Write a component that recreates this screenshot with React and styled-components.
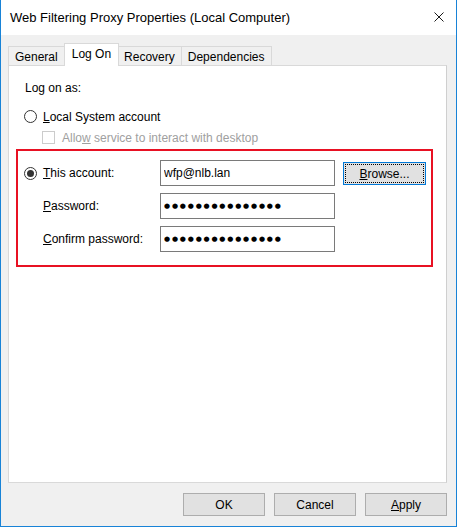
import styled, { createGlobalStyle } from "styled-components";

const GlobalStyle = createGlobalStyle`
  html, body {
    margin: 0;
    padding: 0;
    background: #ffffff;
  }
  body {
    font-family: "Liberation Sans", Arial, sans-serif;
    font-size: 12px;
    color: #000000;
  }
`;

function Key({ children }) {
  return <u>{children}</u>;
}

export default function App() {
  return (
    <>
      <GlobalStyle />
      <Window>
        <TitleBar>
          <Title>Web Filtering Proxy Properties (Local Computer)</Title>
          <CloseIcon viewBox="0 0 10 10">
            <path d="M0.5 0.5 L9.5 9.5 M9.5 0.5 L0.5 9.5" />
          </CloseIcon>
        </TitleBar>
        <Body>
          <Tabs>
            <Tab>General</Tab>
            <Tab $active>Log On</Tab>
            <Tab>Recovery</Tab>
            <Tab>Dependencies</Tab>
          </Tabs>
          <Panel>
            <Heading>Log on as:</Heading>
            <OptionRow>
              <Radio />
              <span>
                <Key>L</Key>ocal System account
              </span>
            </OptionRow>
            <CheckRow>
              <Checkbox />
              <span>
                Allo<Key>w</Key> service to interact with desktop
              </span>
            </CheckRow>
            <Highlight>
              <AccountGrid>
                <GridLabel>
                  <Radio $checked />
                  <span>
                    <Key>T</Key>his account:
                  </span>
                </GridLabel>
                <Field readOnly value="wfp@nlb.lan" />
                <BrowseButton>
                  <FocusRing>
                    <Key>B</Key>rowse...
                  </FocusRing>
                </BrowseButton>

                <GridLabel $indent>
                  <span>
                    <Key>P</Key>assword:
                  </span>
                </GridLabel>
                <Field $secret readOnly value={"●".repeat(15)} />
                <span />

                <GridLabel $indent>
                  <span>
                    <Key>C</Key>onfirm password:
                  </span>
                </GridLabel>
                <Field $secret readOnly value={"●".repeat(15)} />
                <span />
              </AccountGrid>
            </Highlight>
          </Panel>
          <Footer>
            <DialogButton>OK</DialogButton>
            <DialogButton>Cancel</DialogButton>
            <DialogButton>
              <Key>A</Key>pply
            </DialogButton>
          </Footer>
        </Body>
      </Window>
    </>
  );
}

const Window = styled.div`
  width: 457px;
  height: 527px;
  box-sizing: border-box;
  border: 1px solid #1883d7;
  border-top: 0;
  display: flex;
  flex-direction: column;
  background: #f0f0f0;
`;

const TitleBar = styled.div`
  height: 35px;
  flex-shrink: 0;
  display: flex;
  align-items: center;
  justify-content: space-between;
  padding: 0 12px 1px 9px;
  box-sizing: border-box;
  background: #ffffff;
`;

const Title = styled.div`
  font-size: 13px;
  color: #000000;
`;

const CloseIcon = styled.svg`
  width: 10px;
  height: 10px;
  fill: none;
  stroke: #1a1a1a;
  stroke-width: 1;
`;

const Body = styled.div`
  flex: 1;
  display: flex;
  flex-direction: column;
  padding: 8px 9px 0 7px;
`;

const Tabs = styled.div`
  display: flex;
  align-items: flex-end;
  height: 23px;
  margin-bottom: -1px;
  position: relative;
  z-index: 1;
`;

const Tab = styled.div`
  height: ${(p) => (p.$active ? "23px" : "20px")};
  box-sizing: border-box;
  display: flex;
  align-items: center;
  padding: ${(p) => (p.$active ? "0 7px 2px" : "1px 6px 0")};
  margin: ${(p) => (p.$active ? "0 -1px" : "0")};
  border: 1px solid #d9d9d9;
  border-bottom: ${(p) => (p.$active ? "0" : "1px solid #d9d9d9")};
  border-left: ${(p) => (p.$active ? "1px solid #d9d9d9" : "0")};
  background: ${(p) => (p.$active ? "#ffffff" : "#f0f0f0")};
  position: relative;
  z-index: ${(p) => (p.$active ? 2 : 1)};
  &:first-child {
    border-left: 1px solid #d9d9d9;
  }
`;

const Panel = styled.div`
  height: 418px;
  box-sizing: border-box;
  background: #ffffff;
  border: 1px solid #d9d9d9;
  border-right-color: #cfcfcf;
  padding: 15px 13px 0 7px;
  display: flex;
  flex-direction: column;
`;

const Heading = styled.div`
  height: 15px;
  line-height: 15px;
  padding-left: 9px;
`;

const OptionRow = styled.div`
  display: flex;
  align-items: center;
  gap: 6px;
  height: 15px;
  margin-top: 13px;
  padding-left: 8px;
`;

const CheckRow = styled.div`
  display: flex;
  align-items: center;
  gap: 7px;
  height: 15px;
  margin-top: 6px;
  padding-left: 26px;
  color: #a0a0a0;
`;

const Radio = styled.span`
  width: 13px;
  height: 13px;
  box-sizing: border-box;
  border-radius: 50%;
  border: 1px solid #333333;
  display: inline-flex;
  align-items: center;
  justify-content: center;
  flex-shrink: 0;
  &::after {
    content: "";
    width: 7px;
    height: 7px;
    border-radius: 50%;
    background: #333333;
    display: ${(p) => (p.$checked ? "block" : "none")};
  }
`;

const Checkbox = styled.span`
  width: 13px;
  height: 13px;
  box-sizing: border-box;
  border: 1px solid #cccccc;
  flex-shrink: 0;
`;

const Highlight = styled.div`
  margin-top: 4px;
  border: 2px solid #e81123;
  padding: 9px 0 13px 6px;
`;

const AccountGrid = styled.div`
  display: grid;
  grid-template-columns: 128px 175px 83px;
  grid-auto-rows: 26px;
  column-gap: 8px;
  row-gap: 7px;
  align-items: center;
`;

const GridLabel = styled.div`
  display: flex;
  align-items: center;
  gap: 6px;
  padding-left: ${(p) => (p.$indent ? "19px" : "0")};
`;

const Field = styled.input`
  width: 100%;
  height: 26px;
  box-sizing: border-box;
  border: 1px solid #7a7a7a;
  padding: 0 3px 1px;
  margin: 0;
  font-family: ${(p) => (p.$secret ? '"DejaVu Sans", sans-serif' : '"Liberation Sans", Arial, sans-serif')};
  font-size: ${(p) => (p.$secret ? "7px" : "12px")};
  letter-spacing: ${(p) => (p.$secret ? "1.8px" : "0")};
  color: #000000;
  background: #ffffff;
  outline: none;
`;

const BrowseButton = styled.div`
  height: 23px;
  box-sizing: border-box;
  border: 1px solid #0078d7;
  background: #e1e1e1;
  padding: 1px;
  display: flex;
  align-self: start;
  margin-top: 2px;
`;

const FocusRing = styled.div`
  flex: 1;
  border: 1px dotted #000000;
  display: flex;
  align-items: center;
  justify-content: center;
`;

const Footer = styled.div`
  display: flex;
  justify-content: flex-end;
  gap: 9px;
  margin-top: 10px;
`;

const DialogButton = styled.div`
  width: 82px;
  height: 23px;
  box-sizing: border-box;
  border: 1px solid #adadad;
  background: #e1e1e1;
  display: flex;
  align-items: center;
  justify-content: center;
`;
